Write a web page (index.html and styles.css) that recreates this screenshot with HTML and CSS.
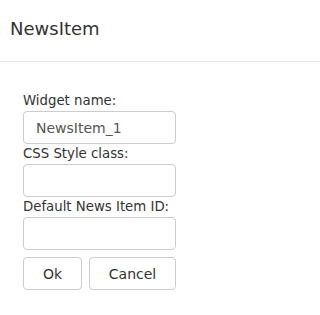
FILE: index.html
```html
<!DOCTYPE html>
<html>
<head>
<meta charset="utf-8">
<link rel="stylesheet" href="styles.css">
</head>
<body>
<div class="dialog">
  <div class="header"><span class="title">NewsItem</span></div>
  <div class="form">
    <label class="label">Widget name:</label>
    <input class="field" type="text" value="NewsItem_1">
    <label class="label">CSS Style class:</label>
    <input class="field" type="text" value="">
    <label class="label">Default News Item ID:</label>
    <input class="field" type="text" value="">
    <div class="actions">
      <button class="btn btn-ok">Ok</button>
      <button class="btn btn-cancel">Cancel</button>
    </div>
  </div>
</div>
</body>
</html>
```
FILE: styles.css
```css
html, body {
  margin: 0;
  padding: 0;
  background: #fff;
}
body {
  font-family: "DejaVu Sans", Verdana, sans-serif;
  color: #333;
}
.header {
  height: 62px;
  box-sizing: border-box;
  padding: 0 10px 4px 10px;
  display: flex;
  align-items: center;
  border-bottom: 1px solid #e5e5e5;
}
.title {
  font-size: 18px;
  color: #333;
}
.form {
  padding: 29px 24px 0 23px;
  display: flex;
  flex-direction: column;
  align-items: flex-start;
}
.label {
  font-size: 13.3px;
  line-height: 20px;
  color: #333;
  white-space: nowrap;
}
.field {
  box-sizing: border-box;
  width: 153px;
  height: 33px;
  margin: 0;
  padding: 0 12px;
  border: 1px solid #ccc;
  border-radius: 4px;
  font-family: "DejaVu Sans", Verdana, sans-serif;
  font-size: 14px;
  color: #555;
  background: #fff;
  outline: none;
}
.actions {
  margin-top: 7px;
  display: flex;
  gap: 7px;
}
.btn {
  box-sizing: border-box;
  height: 33px;
  margin: 0;
  padding: 0;
  border: 1px solid #ccc;
  border-radius: 4px;
  background: #fff;
  font-family: "DejaVu Sans", Verdana, sans-serif;
  font-size: 14px;
  color: #333;
}
.btn-ok {
  width: 59px;
}
.btn-cancel {
  width: 87px;
}
```
